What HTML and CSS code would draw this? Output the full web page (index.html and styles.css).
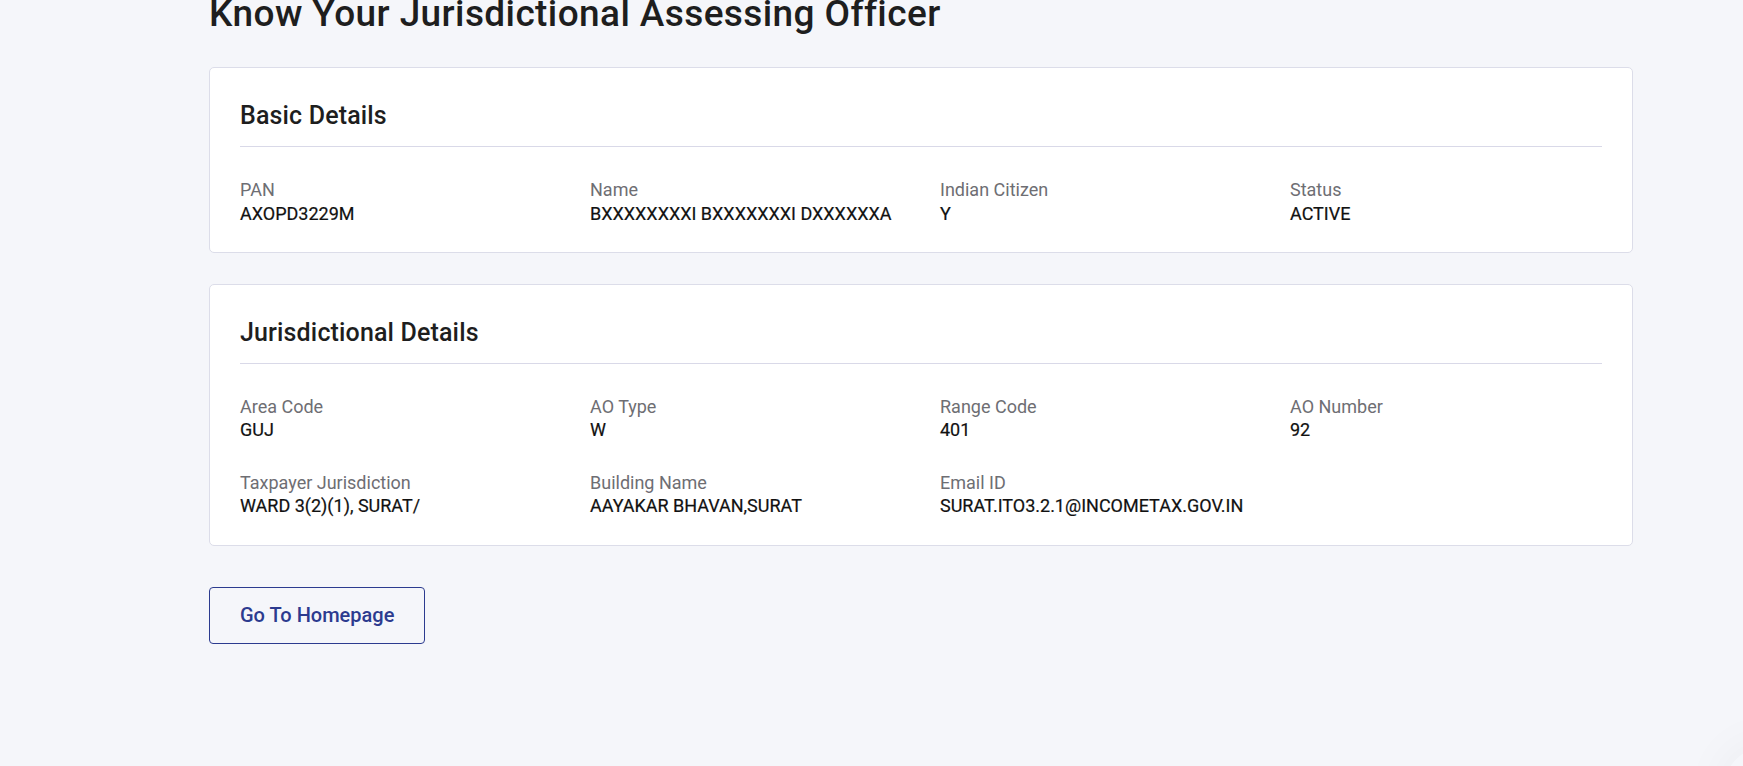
FILE: index.html
```html
<!DOCTYPE html>
<html lang="en">
<head>
<meta charset="utf-8">
<title>Know Your Jurisdictional Assessing Officer</title>
<link rel="stylesheet" href="styles.css">
</head>
<body>
<main class="page">
  <h1 class="page-title">Know Your Jurisdictional Assessing Officer</h1>

  <section class="card">
    <h2 class="card-title">Basic Details</h2>
    <div class="fields">
      <div class="field"><div class="label">PAN</div><div class="value">AXOPD3229M</div></div>
      <div class="field"><div class="label">Name</div><div class="value">BXXXXXXXXI BXXXXXXXI DXXXXXXA</div></div>
      <div class="field"><div class="label">Indian Citizen</div><div class="value">Y</div></div>
      <div class="field"><div class="label">Status</div><div class="value">ACTIVE</div></div>
    </div>
  </section>

  <section class="card">
    <h2 class="card-title">Jurisdictional Details</h2>
    <div class="fields">
      <div class="field"><div class="label">Area Code</div><div class="value">GUJ</div></div>
      <div class="field"><div class="label">AO Type</div><div class="value">W</div></div>
      <div class="field"><div class="label">Range Code</div><div class="value">401</div></div>
      <div class="field"><div class="label">AO Number</div><div class="value">92</div></div>
      <div class="field"><div class="label">Taxpayer Jurisdiction</div><div class="value">WARD 3(2)(1), SURAT/</div></div>
      <div class="field"><div class="label">Building Name</div><div class="value">AAYAKAR BHAVAN,SURAT</div></div>
      <div class="field"><div class="label">Email ID</div><div class="value">SURAT.ITO3.2.1@INCOMETAX.GOV.IN</div></div>
    </div>
  </section>

  <div class="actions">
    <button class="btn-outline" type="button">Go To Homepage</button>
  </div>
</main>
<div class="corner-glow"></div>
</body>
</html>
```

FILE: styles.css
```css
html, body {
  margin: 0;
  padding: 0;
  background: #f5f6fa;
  font-family: Roboto, "Liberation Sans", Arial, sans-serif;
  color: #1d1d1f;
  overflow: hidden;
  height: 100%;
}

.page {
  width: 1424px;
  margin: -8px 0 0 209px;
}

.page-title {
  margin: 0 0 32px 0;
  font-size: 37px;
  line-height: 43.2px;
  font-weight: 500;
  letter-spacing: 0.4px;
  color: #1e1e1e;
}

.card {
  background: #ffffff;
  border: 1px solid #dcdde9;
  border-radius: 5px;
  padding: 30px 30px 27px 30px;
  margin-bottom: 31px;
}

.card-title {
  margin: 0 0 31px 0;
  font-size: 25px;
  line-height: 36px;
  font-weight: 500;
  letter-spacing: 0.15px;
  color: #1e1e1e;
  padding-bottom: 12px;
  border-bottom: 1px solid #d9d9e8;
}

.fields {
  display: grid;
  grid-template-columns: 350px 350px 350px 1fr;
  row-gap: 29px;
}

.label {
  font-size: 18px;
  line-height: 23.4px;
  color: #6e6e73;
}

.value {
  font-size: 18px;
  line-height: 23.4px;
  color: #111111;
  font-weight: 400;
  -webkit-text-stroke: 0.2px #111111;
}

.actions {
  padding-top: 10px;
}

.btn-outline {
  display: inline-flex;
  align-items: center;
  height: 57px;
  padding: 0 30px;
  background: transparent;
  border: 1px solid #2c3b8f;
  border-radius: 4px;
  color: #2c3b8f;
  font-family: Roboto, "Liberation Sans", Arial, sans-serif;
  font-size: 20px;
  font-weight: 500;
  line-height: 55px;
  cursor: pointer;
}

.corner-glow {
  position: fixed;
  right: -70px;
  bottom: -70px;
  width: 90px;
  height: 90px;
  border-radius: 50%;
  box-shadow: 0 0 50px rgba(0, 0, 0, 0.05);
}
```
